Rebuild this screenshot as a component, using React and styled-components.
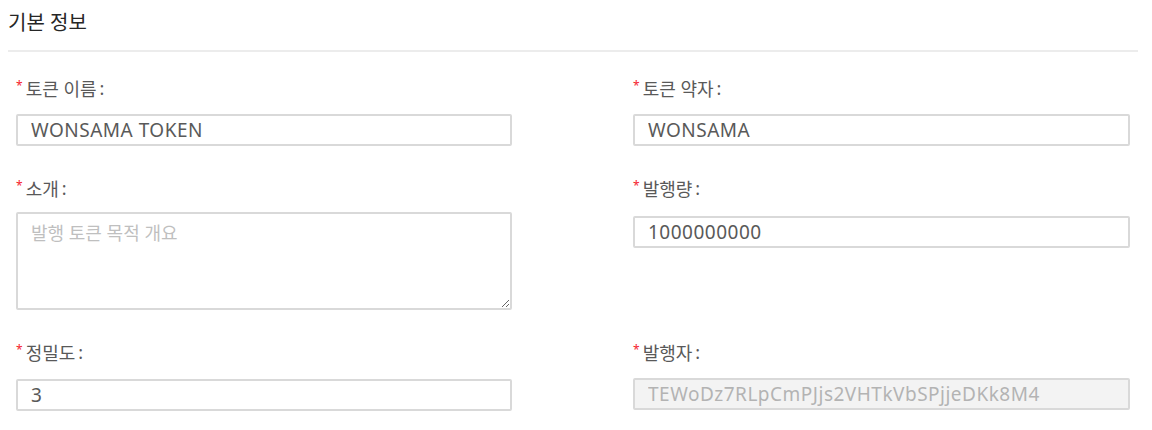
import React from 'react';
import styled, { createGlobalStyle } from 'styled-components';

const GlobalStyle = createGlobalStyle`
  body {
    margin: 0;
    background: #fff;
    font-family: "Noto Sans", "Noto Sans CJK KR", sans-serif;
  }
`;

const Page = styled.div`
  padding: 0 14px 0 8px;
`;

const SectionTitle = styled.div`
  height: 52px;
  display: flex;
  align-items: center;
  padding-bottom: 8px;
  box-sizing: border-box;
  font-size: 20px;
  color: #262626;
  border-bottom: 2px solid #ececec;
`;

const FormGrid = styled.div`
  display: grid;
  grid-template-columns: 496px 497px;
  column-gap: 121px;
  padding: 24px 0 0 8px;
`;

const Item = styled.div`
  display: flex;
  flex-direction: column;
  margin-bottom: 30px;
`;

const Label = styled.label`
  display: flex;
  align-items: center;
  height: 24px;
  margin-bottom: ${({ gap }) => gap}px;
  font-size: 18px;
  color: #595959;
  &::before {
    content: '*';
    color: #f5222d;
    font-size: 12px;
    margin-right: 3px;
    margin-top: -5px;
  }
  &::after {
    content: ':';
    margin: 0 8px 0 3px;
  }
`;

const Input = styled.input`
  box-sizing: border-box;
  width: 100%;
  height: 32px;
  padding: 0 13px;
  border: 2px solid #d9d9d9;
  border-radius: 2px;
  font-family: "Noto Sans", "Noto Sans CJK KR", sans-serif;
  font-size: 19px;
  letter-spacing: 0.5px;
  color: #595959;
  background: #fff;
  outline: none;
  &:disabled {
    background: #f3f3f3;
    color: #b3b3b3;
  }
`;

const TextArea = styled.textarea`
  box-sizing: border-box;
  width: 100%;
  height: 98px;
  padding: 5px 13px;
  border: 2px solid #d9d9d9;
  border-radius: 2px;
  font-family: "Noto Sans", "Noto Sans CJK KR", sans-serif;
  font-size: 18px;
  color: #595959;
  outline: none;
  resize: vertical;
  display: block;
  &::placeholder {
    color: #bfbfbf;
  }
`;

const fields = [
  { label: '토큰 이름', value: 'WONSAMA TOKEN', gap: 14 },
  { label: '토큰 약자', value: 'WONSAMA', gap: 14 },
  { label: '소개', area: true, placeholder: '발행 토큰 목적 개요', gap: 12 },
  { label: '발행량', value: '1000000000', gap: 16 },
  { label: '정밀도', value: '3', gap: 15 },
  { label: '발행자', value: 'TEWoDz7RLpCmPJjs2VHTkVbSPjjeDKk8M4', disabled: true, gap: 14 },
];

export default function App() {
  return (
    <Page>
      <GlobalStyle />
      <SectionTitle>기본 정보</SectionTitle>
      <FormGrid>
        {fields.map(f => (
          <Item key={f.label}>
            <Label gap={f.gap}>{f.label}</Label>
            {f.area
              ? <TextArea placeholder={f.placeholder} />
              : <Input defaultValue={f.value} disabled={f.disabled} />}
          </Item>
        ))}
      </FormGrid>
    </Page>
  );
}
